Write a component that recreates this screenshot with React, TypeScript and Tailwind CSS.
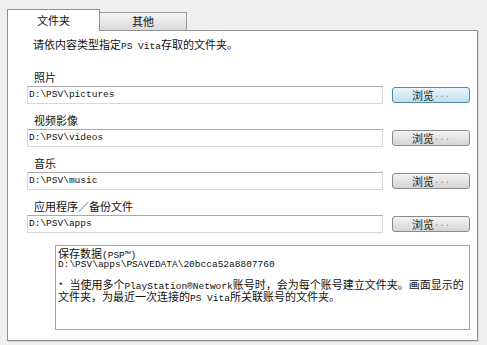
const cjk = "font-['Noto_Sans_CJK_SC',sans-serif]";
const mono = "font-['Liberation_Mono','Noto_Sans_CJK_SC',monospace]";

const folders = [
  { label: '照片', path: 'D:\\PSV\\pictures', focused: true },
  { label: '视频影像', path: 'D:\\PSV\\videos' },
  { label: '音乐', path: 'D:\\PSV\\music' },
  { label: '应用程序／备份文件', path: 'D:\\PSV\\apps' },
];

const FolderRow: React.FC<{ label: string; path: string; focused?: boolean }> = ({ label, path, focused }) => (
  <div className="flex flex-col">
    <div className={`${cjk} ml-[7px] mb-[3px] h-[12px] text-[11px] leading-[12px] text-[#111]`}>{label}</div>
    <div className="flex items-center">
      <div className="w-[356px] h-[18px] border border-[#d5d9de] border-t-[#a7a9ae] bg-white pl-[1px] flex items-center">
        <span className={`${mono} text-[9.5px] leading-[10px] text-[#111]`}>{path}</span>
      </div>
      <button
        className={`ml-[9px] w-[78px] h-[16px] rounded-[3px] border flex items-center justify-center ${
          focused
            ? 'border-[#4a8ea8] bg-gradient-to-b from-[#eaf5fb] to-[#c3dfec]'
            : 'border-[#8a8a8a] bg-gradient-to-b from-[#f4f4f4] to-[#d4d4d4]'
        }`}
      >
        <span className={`${cjk} text-[11px] leading-[12px] text-[#222]`}>浏览</span>
        <span className={`${mono} text-[9px] leading-[12px] text-[#888]`}>...</span>
      </button>
    </div>
  </div>
);

export default function App() {
  return (
    <div className="w-[487px] h-[345px] bg-[#efefef] pt-[9px] pl-[7px] pr-[9px] overflow-hidden">
      {/* tabs */}
      <div className="flex items-end h-[21px]">
        <div className={`${cjk} relative z-10 -mb-px w-[93px] h-[22px] bg-white border border-b-0 border-[#8e9196] flex items-center justify-center text-[11px] text-[#111]`}>
          文件夹
        </div>
        <div className={`${cjk} w-[87px] h-[18px] border border-l-0 border-b-0 border-[#9a9da2] bg-gradient-to-b from-[#f3f3f3] to-[#dcdcdc] flex items-center justify-center text-[11px] text-[#111]`}>
          其他
        </div>
      </div>

      {/* panel */}
      <div className="h-[311px] bg-white border border-[#8e9196] shadow-[1px_1px_0_#d8d8d8] pt-[7px] pl-[19px]">
        <div className={`${cjk} ml-[6px] h-[12px] text-[11px] leading-[12px] text-[#111] whitespace-nowrap`}>
          请依内容类型指定<span className={`${mono} text-[9.5px] leading-[12px]`}>PS Vita</span>存取的文件夹。
        </div>

        <div className="mt-[21px] flex flex-col gap-[10px]">
          {folders.map((f) => (
            <FolderRow key={f.label} {...f} />
          ))}
        </div>

        {/* save data note */}
        <div className="mt-[12px] ml-[28px] w-[415px] h-[85px] border border-[#a3a3a3] pl-[2px] pt-[1px] text-[#111] whitespace-nowrap">
          <div className={`${cjk} h-[12px] text-[11px] leading-[12px]`}>
            保存数据<span className={`${mono} text-[9.5px] leading-[12px]`}>(PSP™)</span>
          </div>
          <div className={`${mono} h-[12px] text-[9.5px] leading-[12px]`}>{'D:\\PSV\\apps\\PSAVEDATA\\20bcca52a8807760'}</div>
          <div className={`${cjk} mt-[7px] h-[12px] text-[11px] leading-[12px]`}>
            <span className={`${mono} text-[9.5px] leading-[12px]`}>* </span>当使用多个<span className={`${mono} text-[9.5px] leading-[12px]`}>PlayStation®Network</span>账号时，会为每个账号建立文件夹。画面显示的
          </div>
          <div className={`${cjk} h-[12px] text-[11px] leading-[12px]`}>
            文件夹，为最近一次连接的<span className={`${mono} text-[9.5px] leading-[12px]`}>PS Vita</span>所关联账号的文件夹。
          </div>
        </div>
      </div>
    </div>
  );
}
